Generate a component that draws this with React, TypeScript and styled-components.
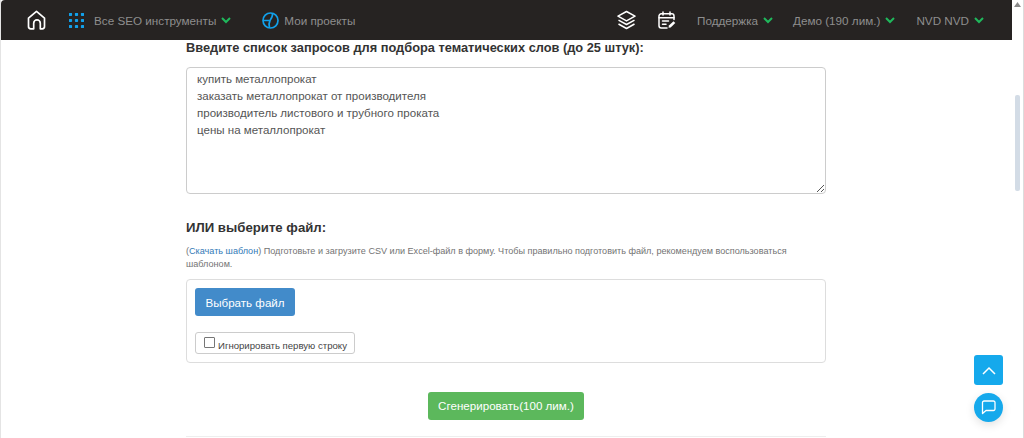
import React from 'react';
import styled, { createGlobalStyle } from 'styled-components';

const GlobalStyle = createGlobalStyle`
  html, body {
    margin: 0;
    height: 100%;
    overflow: hidden;
    background: #fff;
  }

  body {
    font-family: 'Liberation Sans', Arial, sans-serif;
    color: #333;
  }
`;

const Shell = styled.div`
  position: relative;
  display: flex;
  height: 438px;
  width: 1024px;
  overflow: hidden;
  box-sizing: border-box;
  border-left: 1px solid #e4e4e4;
  border-right: 1px solid #dcdcdc;
`;

const Page = styled.div`
  flex: 1;
  min-width: 0;
  display: flex;
  flex-direction: column;
`;

const Navbar = styled.header`
  flex: none;
  height: 40px;
  display: flex;
  align-items: center;
  background: #262322;
  border-top-left-radius: 4px;
  padding: 0 28px 0 26px;
`;

const NavGroup = styled.div`
  display: flex;
  align-items: center;
`;

const Spacer = styled.div`
  flex: 1;
`;

const NavLabel = styled.span`
  font-size: 11.7px;
  color: #8e8e8e;
  white-space: nowrap;
`;

const Chevron = styled.svg`
  width: 10px;
  height: 7px;
  margin-left: 5px;
  fill: none;
  stroke: #1fb85c;
  stroke-width: 2;
`;

const NavItem = styled.div<{ $gap?: number }>`
  display: flex;
  align-items: center;
  margin-left: ${(p) => p.$gap ?? 0}px;
`;

const Body = styled.main`
  flex: 1;
  width: 640px;
  margin-left: 185px;
`;

const Heading = styled.h3`
  margin: 0;
  font-size: 12.8px;
  line-height: 16px;
  font-weight: bold;
  color: #333;
`;

const QueryBox = styled.div`
  margin-top: 11px;
  height: 127px;
  box-sizing: border-box;
  position: relative;
  border: 1px solid #ccc;
  border-radius: 4px;
  padding: 3px 10px;
  font-size: 11.55px;
  line-height: 17px;
  color: #555;
`;

const QueryLine = styled.div`
  white-space: nowrap;
`;

const Resizer = styled.svg`
  position: absolute;
  right: 1px;
  bottom: 1px;
  width: 7px;
  height: 7px;
  stroke: #555;
  stroke-width: 1;
`;

const FileHeading = styled(Heading)`
  margin-top: 26px;
  font-size: 13.2px;
`;

const Hint = styled.p`
  margin: 9px 0 0;
  font-size: 9.08px;
  line-height: 13px;
  color: #737373;
`;

const HintLink = styled.a`
  color: #337ab7;
`;

const UploadPanel = styled.section`
  margin-top: 8px;
  height: 84px;
  box-sizing: border-box;
  border: 1px solid #ddd;
  border-radius: 4px;
  padding: 8px;
`;

const PickButton = styled.div`
  width: 100px;
  height: 28px;
  border-radius: 3px;
  background: #428bca;
  color: #fff;
  font-size: 11.6px;
  display: flex;
  align-items: center;
  justify-content: center;
`;

const IgnoreRow = styled.label`
  margin-top: 16px;
  width: 160px;
  height: 22px;
  box-sizing: border-box;
  border: 1px solid #ccc;
  border-radius: 3px;
  display: flex;
  align-items: center;
  padding: 4px 0 0 8px;
  font-size: 9.6px;
  color: #444;
`;

const CheckMark = styled.span`
  width: 9px;
  height: 9px;
  border: 1px solid #767676;
  border-radius: 1px;
  margin: -6px 3px 0 0;
`;

const Submit = styled.div`
  margin: 29px auto 0;
  width: 156px;
  height: 28px;
  padding-bottom: 2px;
  box-sizing: border-box;
  border-radius: 3px;
  background: #5cb85c;
  color: #fff;
  font-size: 11.6px;
  display: flex;
  align-items: center;
  justify-content: center;
`;

const Divider = styled.hr`
  margin: 16px 0 0;
  border: 0;
  border-top: 1px solid #eee;
`;

const Track = styled.aside`
  flex: none;
  width: 11px;
  position: relative;
  background: #fff;
`;

const Arrow = styled.svg`
  position: absolute;
  top: 2px;
  left: 2px;
  width: 7px;
  height: 5px;
  fill: #8a8a8a;
`;

const Thumb = styled.div`
  position: absolute;
  top: 95px;
  left: 3px;
  width: 5px;
  height: 96px;
  border-radius: 2px;
  background: #d3dce6;
`;

const ScrollTop = styled.div`
  position: absolute;
  left: 973px;
  top: 355px;
  width: 29px;
  height: 30px;
  border-radius: 3px;
  background: #15a9ec;
  display: flex;
  align-items: center;
  justify-content: center;
`;

const Chat = styled.div`
  position: absolute;
  left: 973px;
  top: 393px;
  width: 29px;
  height: 29px;
  border-radius: 50%;
  background: #15a9ec;
  box-shadow: 0 3px 10px rgba(0, 0, 0, 0.12);
  display: flex;
  align-items: center;
  justify-content: center;
`;

const queries = [
  'купить металлопрокат',
  'заказать металлопрокат от производителя',
  'производитель листового и трубного проката',
  'цены на металлопрокат',
];

function Caret() {
  return (
    <Chevron viewBox="0 0 10 7">
      <path d="M1 1l4 4 4-4" />
    </Chevron>
  );
}

function HomeIcon() {
  return (
    <svg width="19" height="20" viewBox="0 0 19 20" fill="none" stroke="#fff" strokeWidth="1.7" strokeLinejoin="round">
      <path d="M1.500 8.200 9.500 1.300l8 6.900v8.300a2.300 2.300 0 0 1-2.300 2.300h-1.900v-5.600a3.300 3.300 0 0 0-6.600 0v5.600H3.800a2.300 2.300 0 0 1-2.300-2.300z" />
    </svg>
  );
}

function GridIcon() {
  const spots = [1.5, 7.5, 13.5];
  return (
    <svg width="15" height="15" viewBox="0 0 15 15" fill="#12a0ea">
      {spots.map((y) => spots.map((x) => <rect key={`${x}-${y}`} x={x - 1.6} y={y - 1.6} width="3.200" height="3.200" rx="0.800" />))}
    </svg>
  );
}

function ProjectsIcon() {
  return (
    <svg width="17" height="17" viewBox="0 0 17 17" fill="none" stroke="#12a0ea" strokeWidth="1.700">
      <circle cx="8.500" cy="8.500" r="7.500" />
      <path d="M10.500 1.300C11 4 9.500 6 8 8.500c-1 2-1.200 4.500-.500 7.200M1 8.500h7" />
    </svg>
  );
}

function LayersIcon() {
  return (
    <svg width="19" height="20" viewBox="0 0 19 20" fill="none" stroke="#fff" strokeWidth="1.500" strokeLinejoin="round">
      <path d="M9.500 1.500 18 6.200l-8.500 4.700L1 6.200z" />
      <path d="M1.500 10.200l8 4.300 8-4.300" />
      <path d="M1.500 14l8 4.500 8-4.500" />
    </svg>
  );
}

function PlannerIcon() {
  return (
    <svg width="18" height="19" viewBox="0 0 18 19" fill="none" stroke="#fff" strokeWidth="1.500" strokeLinecap="round">
      <path d="M9 17H3.200A2.200 2.200 0 0 1 1 14.800V5a2.200 2.200 0 0 1 2.200-2.200h10.600A2.200 2.200 0 0 1 16 5v3.500" />
      <path d="M5 1v3M12 1v3M1 6.800h15M4.500 10h6M4.500 13.200h3.500" />
      <path d="M10.500 16.800l.4-2.200 4.600-4.400 1.800 1.800-4.600 4.400z" fill="#fff" stroke="none" />
    </svg>
  );
}

export default function App() {
  return (
    <>
      <GlobalStyle />
      <Shell>
        <Page>
          <Navbar>
            <NavGroup>
              <HomeIcon />
              <NavItem $gap={23}>
                <GridIcon />
              </NavItem>
              <NavItem $gap={10}>
                <NavLabel>Все SEO инструменты</NavLabel>
                <Caret />
              </NavItem>
              <NavItem $gap={31}>
                <ProjectsIcon />
              </NavItem>
              <NavItem $gap={5}>
                <NavLabel>Мои проекты</NavLabel>
              </NavItem>
            </NavGroup>
            <Spacer />
            <NavGroup>
              <LayersIcon />
              <NavItem $gap={22}>
                <PlannerIcon />
              </NavItem>
              <NavItem $gap={21}>
                <NavLabel>Поддержка</NavLabel>
                <Caret />
              </NavItem>
              <NavItem $gap={20}>
                <NavLabel>Демо (190 лим.)</NavLabel>
                <Caret />
              </NavItem>
              <NavItem $gap={21}>
                <NavLabel>NVD NVD</NavLabel>
                <Caret />
              </NavItem>
            </NavGroup>
          </Navbar>
          <Body>
            <Heading>Введите список запросов для подбора тематических слов (до 25 штук):</Heading>
            <QueryBox>
              {queries.map((q) => (
                <QueryLine key={q}>{q}</QueryLine>
              ))}
              <Resizer viewBox="0 0 7 7">
                <path d="M0 7 7 0M4 7l3-3" />
              </Resizer>
            </QueryBox>
            <FileHeading>ИЛИ выберите файл:</FileHeading>
            <Hint>
              (<HintLink>Скачать шаблон</HintLink>) Подготовьте и загрузите CSV или Excel-файл в форму. Чтобы правильно подготовить файл, рекомендуем воспользоваться шаблоном.
            </Hint>
            <UploadPanel>
              <PickButton>Выбрать файл</PickButton>
              <IgnoreRow>
                <CheckMark />
                Игнорировать первую строку
              </IgnoreRow>
            </UploadPanel>
            <Submit>Сгенерировать(100 лим.)</Submit>
            <Divider />
          </Body>
        </Page>
        <Track>
          <Arrow viewBox="0 0 7 5">
            <path d="M3.500 0 7 5H0z" />
          </Arrow>
          <Thumb />
        </Track>
        <ScrollTop>
          <svg width="14" height="9" viewBox="0 0 14 9" fill="none" stroke="#fff" strokeWidth="1.500">
            <path d="M1 8l6-6 6 6" />
          </svg>
        </ScrollTop>
        <Chat>
          <svg width="15" height="15" viewBox="0 0 15 15" fill="none" stroke="#fff" strokeWidth="1.300" strokeLinejoin="round">
            <path d="M3 1h9.500A1.500 1.500 0 0 1 14 2.500V9a1.500 1.500 0 0 1-1.500 1.500H5L1.500 13.500V2.500A1.500 1.500 0 0 1 3 1z" />
          </svg>
        </Chat>
      </Shell>
    </>
  );
}
